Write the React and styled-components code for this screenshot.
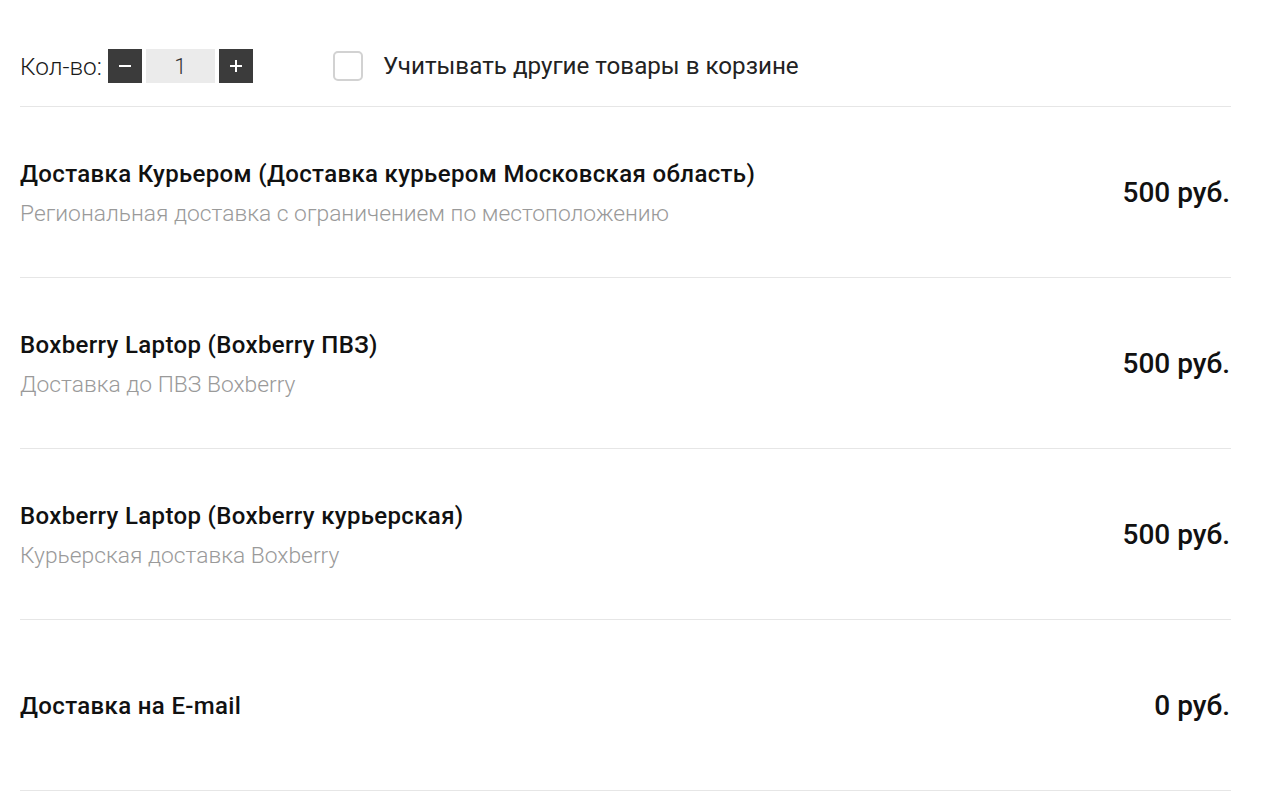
import * as React from "react";
import styled, { createGlobalStyle } from "styled-components";

const GlobalStyle = createGlobalStyle`
  body {
    margin: 0;
    background: #fff;
    font-family: Roboto, "Noto Sans", sans-serif;
    color: #111;
  }
  * { box-sizing: border-box; }
`;

const StyleWrap = styled.div`
  width: 1211px;
  margin-left: 20px;
`;

const StyleQtyRow = styled.div`
  display: flex;
  align-items: center;
  height: 107px;
  padding-top: 26px;
  border-bottom: 1px solid #e6e6e6;
`;

const StyleQty = styled.div`
  display: flex;
  align-items: center;
  font-size: 24.4px;
  font-weight: 300;
  color: #1a1a1a;

  .label {
    margin-right: 6px;
  }
`;

const StyleQtyButton = styled.button`
  width: 34px;
  height: 34px;
  border: none;
  padding: 0;
  background-color: #3b3b3b;
  display: flex;
  align-items: center;
  justify-content: center;
  cursor: pointer;
`;

const StyleQtyValue = styled.div`
  width: 69px;
  height: 34px;
  margin: 0 4px;
  background-color: #ebebeb;
  display: flex;
  align-items: center;
  justify-content: center;
  font-size: 22px;
  font-weight: 300;
  color: #333;
`;

const StyleCheck = styled.label`
  display: flex;
  align-items: center;
  margin-left: 80px;
  font-size: 24.2px;
  font-weight: 400;
  color: #222;
  cursor: pointer;

  .box {
    width: 30px;
    height: 30px;
    border: 2px solid #d2d2d2;
    border-radius: 5px;
    margin-right: 20px;
  }
`;

const StyleRow = styled.div`
  display: flex;
  align-items: center;
  justify-content: space-between;
  height: 171px;
  border-bottom: 1px solid #e6e6e6;
  padding-top: 2px;
`;

const StyleInfo = styled.div`
  display: flex;
  flex-direction: column;
  gap: 13px;

  .title {
    font-size: 24px;
    letter-spacing: 0.35px;
    font-weight: 500;
    color: #111;
    line-height: 28px;
  }

  .desc {
    font-size: 22.8px;
    font-weight: 300;
    color: #9a9a9a;
    line-height: 26px;
  }
`;

const StylePrice = styled.div`
  font-size: 28px;
  font-weight: 500;
  color: #111;
  padding-right: 1px;
  margin-bottom: 1px;
`;

const deliveries = [
  {
    title: "Доставка Курьером (Доставка курьером Московская область)",
    desc: "Региональная доставка с ограничением по местоположению",
    price: "500 руб.",
  },
  {
    title: "Boxberry Laptop (Boxberry ПВЗ)",
    desc: "Доставка до ПВЗ Boxberry",
    price: "500 руб.",
  },
  {
    title: "Boxberry Laptop (Boxberry курьерская)",
    desc: "Курьерская доставка Boxberry",
    price: "500 руб.",
  },
  {
    title: "Доставка на E-mail",
    price: "0 руб.",
  },
];

function MinusIcon() {
  return (
    <svg width="14" height="14" viewBox="0 0 14 14">
      <rect x="1" y="6" width="12" height="2" fill="#fff" />
    </svg>
  );
}

function PlusIcon() {
  return (
    <svg width="14" height="14" viewBox="0 0 14 14">
      <rect x="1" y="6" width="12" height="2" fill="#fff" />
      <rect x="6" y="1" width="2" height="12" fill="#fff" />
    </svg>
  );
}

export default function App() {
  const [qty, setQty] = React.useState(1);
  const [useCart, setUseCart] = React.useState(false);

  return (
    <>
      <GlobalStyle />
      <StyleWrap>
        <StyleQtyRow>
          <StyleQty>
            <span className="label">Кол-во:</span>
            <StyleQtyButton onClick={() => setQty(Math.max(1, qty - 1))}>
              <MinusIcon />
            </StyleQtyButton>
            <StyleQtyValue>{qty}</StyleQtyValue>
            <StyleQtyButton onClick={() => setQty(qty + 1)}>
              <PlusIcon />
            </StyleQtyButton>
          </StyleQty>
          <StyleCheck onClick={() => setUseCart(!useCart)}>
            <span className="box" />
            Учитывать другие товары в корзине
          </StyleCheck>
        </StyleQtyRow>
        {deliveries.map((d) => (
          <StyleRow key={d.title}>
            <StyleInfo>
              <div className="title">{d.title}</div>
              {d.desc && <div className="desc">{d.desc}</div>}
            </StyleInfo>
            <StylePrice>{d.price}</StylePrice>
          </StyleRow>
        ))}
      </StyleWrap>
    </>
  );
}
